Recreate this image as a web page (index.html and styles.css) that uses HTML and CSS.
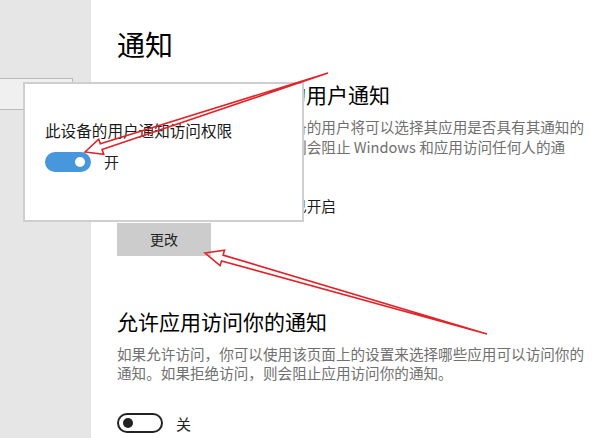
FILE: index.html
```html
<!DOCTYPE html>
<html lang="zh-CN">
  <head>
    <meta charset="UTF-8" />
    <title>通知</title>
    <link rel="stylesheet" href="styles.css">
  </head>
  <body>
    <div class="window">
      <!-- 左侧导航 -->
      <div class="sidebar">
        <div class="search-box"></div>
      </div>

      <!-- 主要内容 -->
      <div class="content">
        <h1>通知</h1>

        <h2>允许访问此设备上的用户通知</h2>
        <p class="desc">
          如果允许访问，则使用此设备的用户将可以选择其应用是否具有其通知的<br>访问权限。如果拒绝访问，则会阻止 Windows 和应用访问任何人的通<br>知。
        </p>
        <p class="status">此设备的用户通知访问权限已开启</p>
        <button class="change-button">更改</button>

        <h2 class="second">允许应用访问你的通知</h2>
        <p class="desc">
          如果允许访问，你可以使用该页面上的设置来选择哪些应用可以访问你的<br>通知。如果拒绝访问，则会阻止应用访问你的通知。
        </p>
        <div class="toggle-row">
          <span class="toggle off"><span class="knob"></span></span>
          <span class="toggle-label">关</span>
        </div>
      </div>

      <!-- 弹出框 -->
      <div class="popup">
        <p class="popup-title">此设备的用户通知访问权限</p>
        <div class="toggle-row">
          <span class="toggle on"><span class="knob"></span></span>
          <span class="toggle-label">开</span>
        </div>
      </div>

      <!-- 红色箭头 -->
      <svg class="arrows" width="609" height="438" viewBox="0 0 609 438">
        <polygon points="85,152 98.7,139.1 100.3,143.8 328,73 102.1,149.6 103.7,154.3" />
        <polygon points="205,253 224.5,250.3 223.1,255.1 487,334 221.5,260.9 220.1,265.7" />
      </svg>
    </div>
  </body>
</html>
```

FILE: styles.css
```css
body {
  margin: 0;
  padding: 0;
  background-color: #fff;
  font-family: "Noto Sans CJK SC", "Noto Sans", sans-serif;
  color: #000;
}
.window {
  position: relative;
  display: flex;
  width: 609px;
  height: 438px;
  overflow: hidden;
}
.sidebar {
  width: 91px;
  flex-shrink: 0;
  background-color: #e6e6e6;
}
.search-box {
  margin-top: 78px;
  width: 72px;
  height: 30px;
  background-color: #f0f0f0;
  border: 1px solid #b8b8b8;
  border-left: none;
}
.content {
  padding-left: 26px;
  padding-top: 24px;
}
h1 {
  font-size: 28px;
  font-weight: normal;
  line-height: 40px;
  margin: 0;
}
h2 {
  font-size: 21px;
  font-weight: normal;
  line-height: 28px;
  margin: 16px 0 0;
}
h2.second {
  margin-top: 51px;
}
.desc {
  width: 480px;
  font-size: 14.6px;
  line-height: 19.5px;
  color: #707070;
  margin: 9px 0 0;
  white-space: nowrap;
}
.status {
  font-size: 14.6px;
  line-height: 20px;
  color: #1a1a1a;
  margin: 20px 0 0;
}
.change-button {
  display: block;
  width: 94px;
  height: 33px;
  margin-top: 7px;
  background-color: #cccccc;
  border: none;
  font-family: inherit;
  font-size: 14px;
  color: #222;
  padding: 0;
}
.toggle-row {
  display: flex;
  align-items: center;
  margin-top: 30px;
}
.toggle {
  position: relative;
  width: 46px;
  height: 20px;
  border-radius: 10px;
  box-sizing: border-box;
}
.toggle .knob {
  position: absolute;
  top: 5px;
  width: 10px;
  height: 10px;
  border-radius: 50%;
}
.toggle.off {
  border: 2px solid #222;
}
.toggle.off .knob {
  top: 3px;
  left: 4px;
  background-color: #222;
}
.toggle.on {
  background-color: #4797dc;
}
.toggle.on .knob {
  right: 6px;
  background-color: #fff;
}
.toggle-label {
  font-size: 15px;
  margin-left: 13px;
  color: #222;
}
.popup {
  position: absolute;
  left: 23px;
  top: 82px;
  width: 257px;
  height: 136px;
  background-color: #fff;
  border: 2px solid #cfcfcf;
  padding-left: 20px;
}
.popup-title {
  font-size: 15.6px;
  line-height: 20px;
  margin: 36px 0 0;
  color: #1a1a1a;
}
.popup .toggle-row {
  margin-top: 11px;
}
.arrows {
  position: absolute;
  left: 0;
  top: 0;
}
.arrows polygon {
  fill: none;
  stroke: #e0242a;
  stroke-width: 1.6;
  stroke-linejoin: miter;
}
```
